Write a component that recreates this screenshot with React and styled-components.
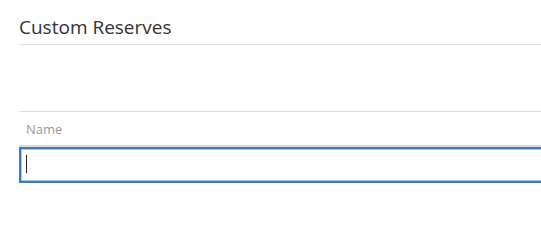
import React from 'react';
import styled, { createGlobalStyle } from 'styled-components';

const App = () => {
  return (
    <>
      <GlobalStyle />
      <Page>
        <Header>
          <Title>Custom Reserves</Title>
        </Header>
        <Section>
          <Label htmlFor="reserve-name">Name</Label>
          <Field>
            <Input id="reserve-name" type="text" autoFocus />
            <Caret />
          </Field>
        </Section>
      </Page>
    </>
  );
};

const GlobalStyle = createGlobalStyle`
  body {
    margin: 0;
    background: #fff;
    font-family: "Open Sans", "Noto Sans", sans-serif;
  }
`;

const Page = styled.div`
  padding-left: 19px;
  overflow-x: clip;
`;

const Header = styled.div`
  height: 44px;
  border-bottom: 1px solid #dedede;
  display: flex;
  align-items: flex-start;
`;

const Title = styled.h2`
  margin: 14px 0 0;
  font-size: 19px;
  font-weight: 400;
  line-height: 26px;
  color: #333;
`;

const Section = styled.div`
  margin-top: 66px;
  border-top: 1px solid #dedede;
  display: flex;
  flex-direction: column;
`;

const Label = styled.label`
  box-sizing: border-box;
  padding: 9px 0 0 7px;
  height: 35px;
  font-size: 13px;
  line-height: 16px;
  color: #999;
`;

const Field = styled.div`
  position: relative;
  width: calc(100% + 20px);
`;

const Input = styled.input`
  display: block;
  box-sizing: border-box;
  width: 100%;
  height: 36px;
  margin: 0;
  padding: 0 6px;
  border: 2px solid #3a7cbd;
  box-shadow: inset 0 0 0 1px #a8c6e6, 0 -2px 0 #dcdcdc;
  outline: none;
  font-family: inherit;
  font-size: 14px;
  color: #333;
  caret-color: transparent;
`;

const Caret = styled.span`
  position: absolute;
  left: 7px;
  top: 8px;
  width: 1px;
  height: 18px;
  background: #222;
  pointer-events: none;
`;

export default App;
